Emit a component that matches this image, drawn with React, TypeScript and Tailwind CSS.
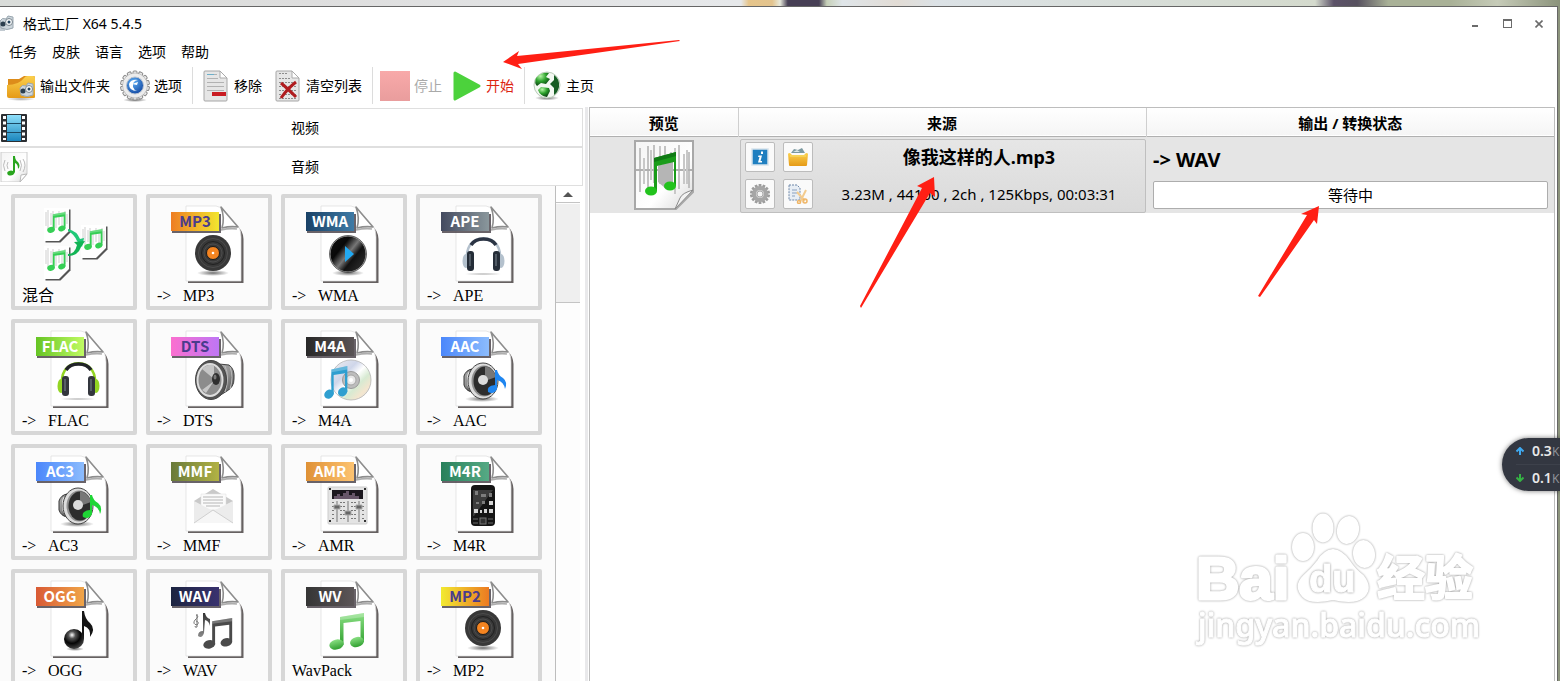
import type { ReactNode } from "react";

const menu = ["任务", "皮肤", "语言", "选项", "帮助"];

function Defs() {
  return (
    <svg className="absolute h-0 w-0" aria-hidden="true">
      <defs>
        <linearGradient id="paper" x1="0" y1="0" x2="1" y2="1">
          <stop offset="0" stopColor="#f4f4f4" />
          <stop offset="0.6" stopColor="#ffffff" />
          <stop offset="1" stopColor="#d8d8d8" />
        </linearGradient>
        <linearGradient id="gold" x1="0" y1="0" x2="0" y2="1">
          <stop offset="0" stopColor="#fbd04e" />
          <stop offset="1" stopColor="#e59a17" />
        </linearGradient>
        <linearGradient id="green" x1="0" y1="0" x2="0" y2="1">
          <stop offset="0" stopColor="#8be084" />
          <stop offset="1" stopColor="#2f9f2f" />
        </linearGradient>
        <linearGradient id="blue" x1="0" y1="0" x2="0" y2="1">
          <stop offset="0" stopColor="#8fe0fb" />
          <stop offset="1" stopColor="#1b86bd" />
        </linearGradient>
        <linearGradient id="grey" x1="0" y1="0" x2="0" y2="1">
          <stop offset="0" stopColor="#333333" />
          <stop offset="1" stopColor="#8a8a8a" />
        </linearGradient>
        <linearGradient id="metal" x1="0" y1="0" x2="1" y2="1">
          <stop offset="0" stopColor="#b8b8b8" />
          <stop offset="0.5" stopColor="#8d8d8d" />
          <stop offset="1" stopColor="#3c3c3c" />
        </linearGradient>
        <linearGradient id="disc" x1="0" y1="0.1" x2="1" y2="0.9">
          <stop offset="0" stopColor="#111111" />
          <stop offset="0.3" stopColor="#080808" />
          <stop offset="0.5" stopColor="#777777" />
          <stop offset="0.65" stopColor="#111111" />
          <stop offset="1" stopColor="#333333" />
        </linearGradient>
        <linearGradient id="cd" x1="0" y1="0" x2="1" y2="1">
          <stop offset="0" stopColor="#f0f0f0" />
          <stop offset="0.35" stopColor="#cfd6ea" />
          <stop offset="0.5" stopColor="#ffffff" />
          <stop offset="0.65" stopColor="#d7ead2" />
          <stop offset="0.8" stopColor="#f3e6cf" />
          <stop offset="1" stopColor="#dddddd" />
        </linearGradient>
        <radialGradient id="ball" cx="0.4" cy="0.3" r="0.7">
          <stop offset="0" stopColor="#ffffff" />
          <stop offset="0.25" stopColor="#555555" />
          <stop offset="0.6" stopColor="#050505" />
          <stop offset="1" stopColor="#444444" />
        </radialGradient>
        <radialGradient id="shade">
          <stop offset="0" stopColor="#333333" stopOpacity="0.7" />
          <stop offset="1" stopColor="#333333" stopOpacity="0" />
        </radialGradient>
        <radialGradient id="sea" cx="0.4" cy="0.3" r="0.8">
          <stop offset="0" stopColor="#5fb0f5" />
          <stop offset="1" stopColor="#0c3f9b" />
        </radialGradient>
        <radialGradient id="globe" cx="0.35" cy="0.25" r="0.8">
          <stop offset="0" stopColor="#b6f7a6" />
          <stop offset="0.5" stopColor="#2ba02b" />
          <stop offset="1" stopColor="#0a3b12" />
        </radialGradient>
      </defs>
    </svg>
  );
}

type BeamedProps = { x: number; y: number; w: number; h: number; fill: string };

function Beamed({ x, y, w, h, fill }: BeamedProps) {
  return (
    <svg x={x} y={y} width={w} height={h} viewBox="0 0 36 37" preserveAspectRatio="none">
      <path d="M11 4 L35 0 V29 H31.500 V8 L14.500 10 V32 H11Z" fill={fill} />
      <ellipse cx="7.500" cy="31.500" rx="7.200" ry="5" fill={fill} transform="rotate(-14 7.500 31.500)" />
      <ellipse cx="28" cy="29" rx="7" ry="5" fill={fill} transform="rotate(-14 28 29)" />
      <path d="M11 4 L35 0 V4 L11 7Z" fill="#ffffff" opacity="0.25" />
    </svg>
  );
}

function Headphones({ band, accent, cup }: { band: string; accent: string; cup: string }) {
  return (
    <g>
      <ellipse cx="67" cy="80" rx="19" ry="1.500" fill="url(#shade)" opacity="0.5" />
      <path d="M51 63 C50 38 85 38 84 63" fill="none" stroke={accent} strokeWidth="2.500" />
      <path d="M55 51 C60 43 75 43 80 51" fill="none" stroke={band} strokeWidth="3.500" />
      <ellipse cx="50" cy="67" rx="3.500" ry="7" fill={accent} />
      <ellipse cx="85" cy="67" rx="3.500" ry="7" fill={accent} />
      <rect x="51" y="57" width="7" height="20" rx="3" fill={cup} />
      <rect x="77" y="57" width="7" height="20" rx="3" fill={cup} />
      <path d="M54 60v12M80 60v12" stroke="#7d8790" strokeWidth="1" />
    </g>
  );
}

function Vinyl() {
  return (
    <g>
      <ellipse cx="67" cy="79" rx="16" ry="3" fill="url(#shade)" />
      <circle cx="67" cy="59" r="18" fill="#383838" />
      <circle cx="67" cy="59" r="14.500" fill="none" stroke="#555555" strokeWidth="0.700" />
      <circle cx="67" cy="59" r="11.500" fill="none" stroke="#1a1a1a" strokeWidth="0.800" />
      <circle cx="67" cy="59" r="9" fill="none" stroke="#555555" strokeWidth="0.700" />
      <circle cx="67" cy="59" r="6.500" fill="#f58420" stroke="#1a1a1a" />
      <circle cx="67" cy="59" r="1.300" fill="#ffffff" />
    </g>
  );
}

function NoteSpeaker({ note }: { note: string }) {
  return (
    <g>
      <ellipse cx="66" cy="80" rx="17" ry="3" fill="url(#shade)" />
      <path d="M48 57 Q50 51 56 50 V73 Q50 72 48 66Z" fill="url(#metal)" stroke="#333333" />
      <ellipse cx="53" cy="61" rx="2" ry="8" fill="#eeeeee" />
      <ellipse cx="67" cy="62" rx="15" ry="18" fill="#dddddd" stroke="#444444" />
      <ellipse cx="68" cy="62" rx="12.500" ry="15.500" fill="#8f8f8f" />
      <ellipse cx="69" cy="62" rx="11.500" ry="14.500" fill="#2d2d2d" />
      <path d="M69 47.500 A11.500 14.500 0 0 1 80 58 L69 62Z" fill="#777777" />
      <circle cx="67" cy="61" r="5" fill="#dcdcdc" />
      <path d="M79 51 H81 Q82 56 87 59 Q92 63 89 70 Q88 63 81 61 V70 Q78 76 72 73 Q70 67 79 66Z" fill={note} />
    </g>
  );
}

function Speaker() {
  return (
    <g>
      <path d="M73 45 L83 46 Q89 50 88 60 Q88 68 81 72 L73 77Z" fill="url(#metal)" stroke="#444444" />
      <path d="M79 47 Q84 58 79 73 M84 48 Q88 58 84 70" fill="none" stroke="#bbbbbb" />
      <ellipse cx="65" cy="61" rx="15.500" ry="19.500" fill="#555555" stroke="#444444" />
      <ellipse cx="64" cy="61" rx="13.500" ry="17" fill="#dedede" />
      <ellipse cx="64" cy="61" rx="11.500" ry="15" fill="#8c8c8c" />
      <path d="M68 60 L56 50 Q61 45 68 46Z M68 62 L56 71 L60 74Z" fill="#c6c6c6" />
      <ellipse cx="70" cy="60" rx="4" ry="6" fill="#2e2e2e" />
      <ellipse cx="69" cy="58" rx="1.500" ry="2.500" fill="#777777" />
    </g>
  );
}

function FilePage({ tag, from, to, ink, children }: { tag: string; from: string; to: string; ink?: string; children: ReactNode }) {
  return (
    <svg className="h-[88px] w-[118px]" viewBox="4 4 118 88" aria-hidden="true">
      <defs>
        <linearGradient id={"tag-" + tag}>
          <stop offset="0" stopColor={from} />
          <stop offset="1" stopColor={to} />
        </linearGradient>
      </defs>
      <path d="M42 86 V89 H97.500 V45 Q97 36 91 32 L86 86Z" fill="#555050" opacity="0.900" />
      <path d="M40 12 H70 Q76 13 79 17 L89 29 Q95 33 95 43 V87 H40Z" fill="#ffffff" stroke="#dcdcdc" strokeWidth="0.700" />
      <path d="M75 13 Q79 24 76 34 Q84 32 92 33 Q86 26 80 19 Z" fill="#ffffff" stroke="#8d8d8d" strokeWidth="1.600" strokeLinejoin="round" />
      <path d="M75 36 Q84 34 91 35" fill="none" stroke="#8b8b8b" strokeWidth="1.600" opacity="0.700" />
      {children}
      <rect x="26" y="20" width="49" height="19" fill="#443c44" opacity="0.800" />
      <rect x="25" y="18" width="48" height="19" fill={`url(#tag-${tag})`} />
      <text x="49" y="33" textAnchor="middle" fill={ink || "#ffffff"} className="font-['Noto_Sans_CJK_SC'] text-[15px] font-bold">
        {tag}
      </text>
    </svg>
  );
}

function MixIcon() {
  const page = "M0 0 H25 V23 L15 33 H0Z";
  return (
    <svg className="h-[88px] w-[118px]" viewBox="4 4 118 88" aria-hidden="true">
      {[
        [33, 14],
        [33, 52],
        [70, 31],
      ].map(([x, y]) => (
        <g key={x + y} transform={`translate(${x} ${y})`}>
          <path d={page} fill="#555555" transform="translate(1.500 1.500)" />
          <path d={page} fill="#ffffff" />
          <path d="M2 4v14M4 2v19M7 5v12M9 3v18M12 6v14M15 3v14M18 5v16M21 3v15M23 6v10" stroke="#cfcfcf" />
          <Beamed x={3} y={4} w={19} h={21} fill="#36cf55" />
        </g>
      ))}
      <path d="M57 35 Q66 37 69 45 L73 44 L71 53 L66 47 Q63 40 57 37Z" fill="#1fc978" />
      <path d="M57 60 Q64 60 66 51 L63 48 L74 47 L70 53 Q67 62 57 62Z" fill="#12b455" />
    </svg>
  );
}

const formats: { label: string; arrow?: boolean; icon: ReactNode }[] = [
  { label: "混合", icon: <MixIcon /> },
  {
    label: "MP3",
    arrow: true,
    icon: <FilePage tag="MP3" from="#ee7d23" to="#f2e62f" ink="#4a3c8c"><Vinyl /></FilePage>,
  },
  {
    label: "WMA",
    arrow: true,
    icon: (
      <FilePage tag="WMA" from="#194166" to="#3f7ba6">
        <ellipse cx="67" cy="79" rx="16" ry="3" fill="url(#shade)" />
        <circle cx="67" cy="60" r="18" fill="url(#disc)" stroke="#999999" />
        <circle cx="67" cy="60" r="18.500" fill="none" stroke="#222222" strokeWidth="0.600" />
        <path d="M64 52 L73 60 L64 68Z" fill="#22a9f2" />
      </FilePage>
    ),
  },
  {
    label: "APE",
    arrow: true,
    icon: <FilePage tag="APE" from="#434a5f" to="#8a979c"><Headphones band="#2b3444" accent="#b4c1cd" cup="#252d38" /></FilePage>,
  },
  {
    label: "FLAC",
    arrow: true,
    icon: <FilePage tag="FLAC" from="#66c424" to="#c0fb63"><Headphones band="#222428" accent="#93d523" cup="#33363d" /></FilePage>,
  },
  {
    label: "DTS",
    arrow: true,
    icon: <FilePage tag="DTS" from="#fb6fcf" to="#be76f5" ink="#4a3c8c"><Speaker /></FilePage>,
  },
  {
    label: "M4A",
    arrow: true,
    icon: (
      <FilePage tag="M4A" from="#282828" to="#5a5456">
        <circle cx="70" cy="61" r="20" fill="url(#cd)" stroke="#b5b5b5" strokeWidth="0.800" />
        <circle cx="70" cy="61" r="8.500" fill="#bdbdbd" stroke="#999999" />
        <circle cx="70" cy="61" r="5" fill="#e8e8e8" stroke="#a5a5a5" />
        <circle cx="70" cy="61" r="2" fill="#ffffff" />
        <Beamed x={43} y={47} w={24} h={33} fill="#2f9fd0" />
      </FilePage>
    ),
  },
  {
    label: "AAC",
    arrow: true,
    icon: <FilePage tag="AAC" from="#4b87fb" to="#8cbcfd"><NoteSpeaker note="#1f86f0" /></FilePage>,
  },
  {
    label: "AC3",
    arrow: true,
    icon: <FilePage tag="AC3" from="#4b87fb" to="#8cbcfd"><NoteSpeaker note="#1fd636" /></FilePage>,
  },
  {
    label: "MMF",
    arrow: true,
    icon: (
      <FilePage tag="MMF" from="#687a3a" to="#b2b244">
        <path d="M48 57 L67 45 L87 57 V78 H48Z" fill="#c9c9c9" />
        <path d="M55 50 H80 V66 H55Z" fill="#fafafa" stroke="#dddddd" strokeWidth="0.500" />
        <path d="M57 53h20M57 56h20M57 59h20M60 62h14" stroke="#a5a5a5" strokeWidth="0.800" />
        <path d="M48 57 L67 67 L87 57 V79 H48Z" fill="#ececec" />
        <path d="M48 79 L67 66 L87 79" fill="#f6f6f6" stroke="#d0d0d0" />
      </FilePage>
    ),
  },
  {
    label: "AMR",
    arrow: true,
    icon: (
      <FilePage tag="AMR" from="#df9136" to="#fdc371">
        <rect x="47" y="43" width="39" height="37" rx="1" fill="#e4e4e4" stroke="#cccccc" />
        <rect x="51" y="46" width="31" height="9" fill="#1b171e" />
        <path d="M53 55v-3h3v-2h3v2h3v-3h3v-2h3v4h3v-2h3v3h4v3Z" fill="#675669" />
        <path d="M56 57v21M67 57v21M78 57v21" stroke="#777777" />
        <path d="M52 58v20M60 58v20M63 58v20M71 58v20M74 58v20M82 58v20" stroke="#777777" strokeDasharray="1 3" strokeWidth="2" />
        <path d="M53 61h6v4h-6zM64 67h6v4h-6zM75 61h6v4h-6z" fill="#666666" stroke="#aaaaaa" />
        <path d="M48 45h2M83 45h2M48 77h2M83 77h2" stroke="#333333" strokeWidth="2" />
      </FilePage>
    ),
  },
  {
    label: "M4R",
    arrow: true,
    icon: (
      <FilePage tag="M4R" from="#28805b" to="#56aa85">
        <rect x="55" y="41" width="24" height="41" rx="4" fill="#151515" />
        <path d="M57 46h20v26h-20z" fill="#3c3c3c" />
        <path d="M77 46v26h-19Z" fill="#151515" />
        <path d="M59 47h3v4h-3zM65 50h5v3h-5zM73 49h3v4h-3zM60 58h3v2h-3zM66 57h3v3h-3z" fill="#7d7d7d" />
        <path d="M58 65h4v4h-4zM64 66h2v3h-2zM68 65h3v4h-3zM73 65h4v4h-4zM73 57h4v4h-4z" fill="#d5d5d5" />
        <path d="M57 75h5M72 75h5M57 79h5M72 79h5" stroke="#6a6a6a" />
        <rect x="64" y="74" width="6" height="6" fill="#333333" stroke="#777777" />
      </FilePage>
    ),
  },
  {
    label: "OGG",
    arrow: true,
    icon: (
      <FilePage tag="OGG" from="#d95a35" to="#f0a548">
        <ellipse cx="64" cy="80" rx="9" ry="2" fill="url(#shade)" />
        <path d="M71 42 H73 Q74 50 79 54 Q85 60 79 68 Q80 59 73 57 V70 H71Z" fill="#151515" />
        <circle cx="63" cy="70" r="10" fill="url(#ball)" />
      </FilePage>
    ),
  },
  {
    label: "WAV",
    arrow: true,
    icon: (
      <FilePage tag="WAV" from="#1c2440" to="#39326f">
        <path d="M50 46 Q54 47 49 51 Q46 55 51 56 Q54 53 50 52 M51 45 V58 Q49 59 49 57" fill="none" stroke="#777777" />
        <path d="M57 44 H59 Q60 49 64 50 V57 Q63 52 59 51 L58 64 Q56 70 52 67 Q52 62 57 62Z" fill="url(#grey)" />
        <Beamed x={57} y={49} w={30} h={31} fill="#4a4a4a" />
      </FilePage>
    ),
  },
  {
    label: "WavPack",
    icon: (
      <FilePage tag="WV" from="#353535" to="#5c5658">
        <Beamed x={48} y={44} w={36} h={37} fill="url(#green)" />
      </FilePage>
    ),
  },
  {
    label: "MP2",
    arrow: true,
    icon: <FilePage tag="MP2" from="#f2ea30" to="#ec7a22" ink="#4a3c8c"><Vinyl /></FilePage>,
  },
];

function Camera({ x, y }: { x: number; y: number }) {
  return (
    <g transform={`translate(${x} ${y})`}>
      <path d="M1 5 Q3 1 7 3 L9 0 L14 1 V12 Q8 15 2 12Z" fill="#cdd6dc" stroke="#9aa7b0" />
      <circle cx="4" cy="8" r="2.500" fill="#2b3e4e" />
      <circle cx="10" cy="6" r="3.500" fill="#f7f9fa" stroke="#7b8790" />
      <circle cx="10" cy="6" r="1.500" fill="#24435c" />
    </g>
  );
}

function FolderIcon() {
  return (
    <svg className="h-8 w-[30px]" viewBox="0 0 30 32" aria-hidden="true">
      <ellipse cx="15" cy="29" rx="14" ry="2" fill="url(#shade)" opacity="0.600" />
      <path d="M2 9 H13 L18 6 H28 Q29 6 29 8 V25 H2Z" fill="#dd8c1a" />
      <path d="M1 15 Q13 15 18 8 Q19 6 22 6 H27 Q29 6 29 8 V27 Q29 28 28 28 H3 Q1 28 1 26Z" fill="url(#gold)" />
      <Camera x={13} y={13} />
    </svg>
  );
}

const teeth = Array.from({ length: 14 }, (_, i) => (i * 360) / 14);

function GearIcon() {
  return (
    <svg className="h-8 w-[30px]" viewBox="0 0 30 32" aria-hidden="true">
      <ellipse cx="15" cy="30" rx="12" ry="2" fill="url(#shade)" />
      <g fill="#ececec" stroke="#8a8a8a" strokeWidth="1">
        {teeth.map((a) => (
          <rect key={a} x="13" y="1" width="4" height="6" rx="1" transform={`rotate(${a} 15 15.500)`} />
        ))}
        <circle cx="15" cy="15.500" r="12.500" strokeOpacity="0.4" />
      </g>
      <circle cx="15" cy="15.500" r="8.500" fill="url(#sea)" stroke="#b9c3d0" />
      <path d="M18 10 Q12 11 13 17 Q14 20 17 21 Q9 21 9 14 Q11 9 18 10Z" fill="#ffffff" />
      <path d="M12 14 L18 12 L17 15Z" fill="#ffffff" />
    </svg>
  );
}

function DocIcon({ clear }: { clear?: boolean }) {
  return (
    <svg className="h-8 w-[30px]" viewBox="0 0 30 32" aria-hidden="true">
      <path d="M5 1 H20 L27 8 V30 Q27 31 26 31 H5 Q4 31 4 30 V2 Q4 1 5 1Z" fill="#e6e6e6" stroke="#a6a6a6" />
      <path d="M20 1 V8 H27Z" fill="#ffffff" stroke="#aaaaaa" />
      {clear ? (
        <>
          <path d="M7 3.500h9M7 8.500h12M7 12.500h17M7 16.500h17M7 20.500h17M7 24.500h17M7 28.500h17" stroke="#8c8c8c" strokeDasharray="2 1" />
          <path d="M9 13 Q15 18 24 27 M24 12 Q16 18 9 28" stroke="#b01c1f" strokeWidth="3" fill="none" />
        </>
      ) : (
        <>
          <path d="M7 4.500h10M7 8.500h11M7 12.500h17M7 16.500h17M7 20.500h17" stroke="#b2b2b2" />
          <path d="M7 4.500h7" stroke="#6dafc9" />
          <rect x="12" y="22" width="14" height="4" fill="#c91c22" />
        </>
      )}
    </svg>
  );
}

function GlobeIcon() {
  return (
    <svg className="h-8 w-[30px]" viewBox="0 0 30 32" aria-hidden="true">
      <ellipse cx="15" cy="28" rx="12" ry="2.500" fill="url(#shade)" />
      <circle cx="15" cy="15" r="13" fill="#f3f8f2" stroke="#b9cbb8" />
      <path d="M4 8 Q9 2 17 3 L14 7 L18 9 L14 14 L9 13 L5 16 Q2 13 4 8Z" fill="url(#globe)" />
      <path d="M9 17 L17 18 L18 21 L15 27 Q8 26 6 20Z" fill="url(#globe)" />
      <path d="M22 5 Q28 9 27 17 Q26 22 22 25 L22 18 L18 14 L22 10Z" fill="#155c22" />
    </svg>
  );
}

function ToolButton({ icon, label, tone, disabled }: { icon: ReactNode; label: string; tone?: string; disabled?: boolean }) {
  return (
    <button type="button" disabled={disabled} className={"flex items-center gap-1 whitespace-nowrap " + (tone || "text-black")}>
      {icon}
      {label}
    </button>
  );
}

function Toolbar() {
  return (
    <div className="mt-[3px] flex h-[37px] text-sm">
      <div className="flex items-center gap-2.5 border-r border-[#dcdcdc] pr-[10px] pl-1.5">
        <ToolButton icon={<FolderIcon />} label="输出文件夹" />
        <ToolButton icon={<GearIcon />} label="选项" />
      </div>
      <div className="flex items-center gap-2.5 border-r border-[#dcdcdc] pr-[10px] pl-[7px]">
        <ToolButton icon={<DocIcon />} label="移除" />
        <ToolButton icon={<DocIcon clear />} label="清空列表" />
      </div>
      <div className="flex items-center gap-2.5 border-r border-[#dcdcdc] pr-[10px] pl-[7px]">
        <ToolButton
          disabled
          tone="text-[#a9a9a9]"
          label="停止"
          icon={<span className="h-[30px] w-[30px] bg-linear-to-b from-[#f8a9a9] to-[#e99d9d]" />}
        />
        <ToolButton
          tone="text-[#dd2511]"
          label="开始"
          icon={
            <svg className="h-8 w-[30px]" viewBox="0 0 30 32" aria-hidden="true">
              <path d="M3 3 L27 16 L3 29Z" fill="#4cd23c" stroke="#4cd23c" strokeWidth="3" strokeLinejoin="round" />
            </svg>
          }
        />
      </div>
      <div className="flex items-center pl-[7px]">
        <ToolButton icon={<GlobeIcon />} label="主页" />
      </div>
    </div>
  );
}

function TitleBar() {
  return (
    <header className="flex h-[33px] items-center justify-between text-sm text-black">
      <div className="flex items-center gap-[9px]">
        <svg className="h-[18px] w-[14px]" viewBox="0 0 14 18" aria-hidden="true">
          <rect x="0" y="8" width="5" height="8" fill="#c2cad1" />
          <circle cx="1" cy="8" r="2.500" fill="#13314e" />
          <Camera x={-1} y={1} />
        </svg>
        <h1>格式工厂 X64 5.4.5</h1>
      </div>
      <div className="flex pr-[2px]">
        <button type="button" aria-label="最小化" className="flex h-8 w-8 items-center justify-center">
          <span className="mt-1 h-0.5 w-1.5 bg-[#6b6b6b]" />
        </button>
        <button type="button" aria-label="最大化" className="flex h-8 w-8 items-center justify-center">
          <span className="h-[9px] w-[9px] border border-t-2 border-[#6b6b6b]" />
        </button>
        <button type="button" aria-label="关闭" className="flex h-8 w-8 items-center justify-center">
          <svg className="h-2 w-2" viewBox="0 0 8 8" aria-hidden="true">
            <path d="M0.500 0.500 L7.500 7.500 M7.500 0.500 L0.500 7.500" stroke="#6b6b6b" strokeWidth="1.600" />
          </svg>
        </button>
      </div>
    </header>
  );
}

function FormatPanel() {
  return (
    <aside className="mt-px flex w-[583px] shrink-0 flex-col">
      <div className="border-t border-r border-[#dfdfdf] text-sm text-black">
        <button type="button" className="flex h-[37px] w-full items-center">
          <svg className="h-7 w-7" viewBox="0 0 28 28" aria-hidden="true">
            <rect x="1" y="0" width="26" height="28" rx="1" fill="#2c2f33" />
            <rect x="7" y="1" width="14" height="26" fill="url(#blue)" />
            <path d="M7 9.500h14M7 18.500h14" stroke="#1a4964" />
            <path d="M4.500 2v24M23.500 2v24" stroke="#ffffff" strokeWidth="3" strokeDasharray="3 2.500" />
          </svg>
          <span className="flex-1 text-center">视频</span>
        </button>
        <button type="button" className="flex h-[39px] w-full items-center border-t-2 border-[#dfdfdf]">
          <svg className="h-[30px] w-7" viewBox="0 0 28 30" aria-hidden="true">
            <path d="M1 0 H27 V22 L20 30 H1Z" fill="url(#paper)" stroke="#cccccc" />
            <path d="M27 22 L21 23 L20 30Z" fill="#ffffff" stroke="#b9b9b9" />
            <path d="M5 8q-3 5 0 11M8 10q-2 3 0 7M20 8q3 5 0 11M23 7q4 6 0 13" fill="none" stroke="#bcbcbc" />
            <path d="M13 4 H15 Q15 8 18 10 Q21 14 18 17 Q18 12 15 11 V20 Q13 25 8 23 Q6 20 9 19 Q11 18 13 19Z" fill="#29a51e" />
          </svg>
          <span className="flex-1 text-center">音频</span>
        </button>
        <div className="h-px bg-[#dfdfdf]" />
      </div>
      <div className="flex min-h-0 flex-1">
        <div className="grid flex-1 grid-cols-[repeat(4,126px)] content-start gap-[9px] overflow-hidden bg-[#fbfbfb] pt-2 pl-[11px]">
          {formats.map((f) => (
            <button
              key={f.label}
              type="button"
              className="flex h-[116px] flex-col rounded-xs border-4 border-[#d7d7d7] text-left font-['Liberation_Serif','Noto_Sans_CJK_SC',serif] text-base leading-5 text-black"
            >
              {f.icon}
              <span className="flex pl-[7px]">
                {f.arrow && <span className="w-[26px]">-&gt;</span>}
                {f.label}
              </span>
            </button>
          ))}
        </div>
        <div className="mr-[3px] flex w-[25px] flex-col border-l border-[#bdbdbd] bg-[#fdfdfd]">
          <button type="button" aria-label="向上滚动" className="flex h-[17px] items-center justify-center border-b border-[#c4c4c4] bg-white">
            <svg className="h-[5px] w-[10px]" viewBox="0 0 10 5" aria-hidden="true">
              <path d="M0 5 L5 0 L10 5Z" fill="#555555" />
            </svg>
          </button>
          <div className="mt-px h-[99px] border-b border-[#c4c4c4] bg-[#efefef]" />
        </div>
      </div>
    </aside>
  );
}

function ActionButton({ label, children }: { label: string; children: ReactNode }) {
  return (
    <button type="button" aria-label={label} className="flex h-[30px] w-[30px] items-center justify-center rounded-xs border border-[#bcbcbc] bg-[#fafafa]">
      <svg className="h-5 w-5" viewBox="0 0 20 20" aria-hidden="true">
        {children}
      </svg>
    </button>
  );
}

function TaskList() {
  return (
    <main className="mr-0.5 min-w-0 flex-1 border border-b-0 border-[#bdbdbd]">
      <table className="w-full table-fixed border-collapse text-black">
        <colgroup>
          <col className="w-[148px]" />
          <col />
          <col />
        </colgroup>
        <thead>
          <tr className="h-[28px] border-b border-[#b0b0b0] bg-linear-to-b from-white to-[#f5f5f5] text-[15px]">
            <th className="border-r border-[#cfcfcf] p-0 pt-0.5 font-bold">预览</th>
            <th className="border-r border-[#cfcfcf] p-0 pt-0.5 font-bold">来源</th>
            <th className="p-0 pt-0.5 font-bold">输出 / 转换状态</th>
          </tr>
        </thead>
        <tbody>
          <tr className="h-[76px] bg-[#e5e5e5]">
            <td className="p-0">
              <svg className="mx-auto h-[70px] w-[60px]" viewBox="0 0 60 70" aria-hidden="true">
                <path d="M1 1 H59 V52 L42 69 H1Z" fill="url(#paper)" stroke="#a8a8a8" strokeWidth="2" />
                <path d="M2 30h56" stroke="#b0b0b0" strokeWidth="2" />
                <path d="M6 8v44M14 6v46M20 5v38M31 6v42M45 5v44M55 12v36" stroke="#b0b0b0" strokeWidth="1.500" />
                <path d="M10 18v26M17 10v30M26 6v38M37 12v28M41 8v46M50 14v30M53 10v34" stroke="#c8c8c8" strokeWidth="2" />
                <path d="M24 26 L39 20 V42 L31 48 L24 42Z" fill="#b5b5b5" />
                <path d="M20 18 L42 12 V46 H40 V22 L23 26 V51 H20Z" fill="#1a9c1a" />
                <path d="M20 18 L42 12 V16 L20 22Z" fill="#0f7a14" />
                <ellipse cx="17" cy="51" rx="6" ry="4.500" fill="#22c31d" />
                <ellipse cx="36" cy="46" rx="6" ry="4.500" fill="#22c31d" />
                <path d="M59 50 Q48 53 46 58 L41 69Z" fill="#f2f2f2" stroke="#8a8a8a" />
              </svg>
            </td>
            <td className="p-0 pt-0.5 pl-0.5">
              <div className="flex h-[74px] items-center rounded-xs border border-[#bfbfbf] bg-linear-to-b from-[#e6e6e6] to-[#dadada] pl-1">
                <div className="grid grid-cols-2 gap-x-2 gap-y-[7px]">
                  <ActionButton label="信息">
                    <rect x="2" y="2" width="16" height="16" fill="#1f7fc0" stroke="#d7e3ec" strokeWidth="1.500" />
                    <path d="M11 4.500h2v2.500h-2zM8.500 8.500 H12 L10.500 14 H12 V15.500 H8 L9.500 10 H8Z" fill="#ffffff" />
                  </ActionButton>
                  <ActionButton label="打开文件夹">
                    <path d="M3 6 L6 2 L10 3 L14 1 L17 6Z" fill="#7b99a0" />
                    <path d="M5 5 L9 3 L12 5Z" fill="#d7e5e8" />
                    <path d="M0 7 Q0 6 2 6 L4 8 H16 L18 6 Q20 6 20 7 L19 18 Q19 19 18 19 H2 Q1 19 1 18Z" fill="url(#gold)" />
                    <path d="M2 9h16" stroke="#f6e06c" />
                  </ActionButton>
                  <ActionButton label="设置">
                    <g fill="#9c9c9c">
                      {teeth.map((a) => (
                        <rect key={a} x="8.600" y="0" width="2.800" height="5" transform={`rotate(${a} 10 10)`} />
                      ))}
                    </g>
                    <circle cx="10" cy="10" r="6" fill="#d6d6d6" stroke="#a6a6a6" strokeWidth="4" />
                    <circle cx="10" cy="10" r="3" fill="#f4f4f4" stroke="#aaaaaa" />
                  </ActionButton>
                  <ActionButton label="剪辑">
                    <path d="M1 1 H9 L12 4 V16 H1Z" fill="#e8eef5" stroke="#6c86a8" strokeDasharray="2 1" />
                    <path d="M4 6h5M4 9h5M4 12h3" stroke="#8aa1bf" />
                    <path d="M9 8 L17 17 M18 6 L12 18" stroke="#f3cb8e" strokeWidth="2" />
                    <circle cx="17" cy="17" r="2" fill="none" stroke="#efb566" strokeWidth="1.500" />
                    <circle cx="11" cy="18" r="1.500" fill="none" stroke="#efb566" strokeWidth="1.500" />
                  </ActionButton>
                </div>
                <div className="flex-1 text-center">
                  <p className="text-lg leading-[37px] font-bold">像我这样的人.mp3</p>
                  <p className="text-[15px] leading-[37px]">3.23M , 44100 , 2ch , 125Kbps, 00:03:31</p>
                </div>
              </div>
            </td>
            <td className="p-0 pr-1.5 pl-[7px]">
              <p className="text-xl leading-[37px] font-bold">-&gt; WAV</p>
              <div role="progressbar" aria-label="转换状态" className="mt-[3px] h-7 rounded-xs border border-[#adadad] bg-white text-center text-[15px] leading-[27px]">
                等待中
              </div>
            </td>
          </tr>
        </tbody>
      </table>
    </main>
  );
}

function Watermark() {
  return (
    <svg className="pointer-events-none absolute right-[80px] bottom-[28px] h-[144px] w-[290px] overflow-visible" viewBox="0 0 290 144" aria-hidden="true">
      <g fill="#ffffff" stroke="#ffffff" strokeWidth="2" strokeLinejoin="round">
        <text x="6" y="90" strokeWidth="3" className="font-['Liberation_Sans'] text-[60px] font-bold drop-shadow-[0_0_1px_#999999]">Bai</text>
        <g className="drop-shadow-[0_0_1px_#999999]">
          <ellipse cx="113" cy="38" rx="10" ry="13" />
          <ellipse cx="133" cy="19" rx="9.500" ry="13.500" />
          <ellipse cx="158" cy="21" rx="10" ry="13" transform="rotate(12 158 21)" />
          <ellipse cx="174" cy="45" rx="10" ry="13" transform="rotate(-8 174 45)" />
          <path d="M143 41 Q152 42 159 52 Q165 61 173 67 Q182 79 174 87 Q166 95 143 90 Q120 95 113 87 Q104 77 114 67 Q122 60 128 52 Q134 42 143 41Z" />
        </g>
        <text x="119" y="83" strokeWidth="1" className="font-['Liberation_Sans'] text-[38px] font-bold drop-shadow-[0_0_1px_#888888]">du</text>
        <text x="187" y="86" className="font-['Noto_Sans_CJK_SC'] text-[48px] font-bold drop-shadow-[0_0_1px_#999999]">经验</text>
        <text x="8" y="128" strokeWidth="1" className="font-['Noto_Sans'] text-[32px] font-medium drop-shadow-[0_0_1px_#999999]">jingyan.baidu.com</text>
      </g>
    </svg>
  );
}

function SpeedBadge() {
  return (
    <div className="absolute top-[438px] right-0 w-[58px] overflow-hidden rounded-l-full bg-[#333741] pl-3.5 font-['Noto_Sans',sans-serif] text-sm leading-[26px] font-semibold text-[#e8e8e8] shadow-[0_0_5px_#00000088]">
      <div className="flex items-center gap-2 whitespace-nowrap">
        <svg className="h-2 w-2 shrink-0" viewBox="0 0 8 8" aria-hidden="true">
          <path d="M4 8V1M0.500 4.500L4 1L7.500 4.500" fill="none" stroke="#3fa9f0" strokeWidth="2" />
        </svg>
        <span>0.3<small className="text-xs font-normal text-[#8c9096]">K</small></span>
      </div>
      <div className="flex items-center gap-2 border-t border-[#3d414b] whitespace-nowrap">
        <svg className="h-2 w-2 shrink-0" viewBox="0 0 8 8" aria-hidden="true">
          <path d="M4 0V7M0.500 3.500L4 7L7.500 3.500" fill="none" stroke="#35b344" strokeWidth="2" />
        </svg>
        <span>0.1<small className="text-xs font-normal text-[#8c9096]">K</small></span>
      </div>
    </div>
  );
}

// red pointers drawn over the window
function Pointers() {
  return (
    <svg className="pointer-events-none absolute inset-0 h-full w-full" aria-hidden="true">
      <g fill="#ff1f14">
        <path d="M503 62 L519 51 L517 56 L679 40 L680 41 L518 64 L522 69Z" />
        <path d="M934 177 L917 186 L922 188 L860 306 L861 308 L930 193 L935 197Z" />
        <path d="M1319 206 L1301 214 L1307 215 L1258 296 L1260 297 L1314 220 L1317 224Z" />
      </g>
    </svg>
  );
}

export default function App() {
  return (
    <div className="relative flex h-screen flex-col overflow-hidden bg-[linear-gradient(90deg,#d9dcd9_0%,#dedede_20%,#e6e8ea_47%,#e6e8ea_47.500%,#e6c58b_48%,#e3c48f_49.500%,#e8eadc_50%,#473f55_50.500%,#473f55_52.500%,#c6d0b8_53%,#dfe5e9_54%,#e2dcd5_57.500%,#dce2e6_60%,#d4dacd_84.300%,#5c5268_85.500%,#57515f_87%,#a9b197_89%,#a9b197_93%,#c6cbb8_96%,#8b937b_100%)] pt-1.5 pr-0.5 font-['Noto_Sans','Noto_Sans_CJK_SC',sans-serif]">
      <Defs />
      <div className="flex min-h-0 flex-1 flex-col border-t border-r border-[#666666] bg-white">
        <TitleBar />
        <nav className="flex h-6 items-center gap-[15px] pl-[9px] text-sm text-black">
          {menu.map((m) => (
            <button key={m} type="button">{m}</button>
          ))}
        </nav>
        <Toolbar />
        <div className="mt-[3px] flex min-h-0 flex-1">
          <FormatPanel />
          <div className="mr-px ml-0.5 w-[3px] bg-[#e9e9eb]" />
          <TaskList />
        </div>
      </div>
      <Watermark />
      <SpeedBadge />
      <Pointers />
    </div>
  );
}
